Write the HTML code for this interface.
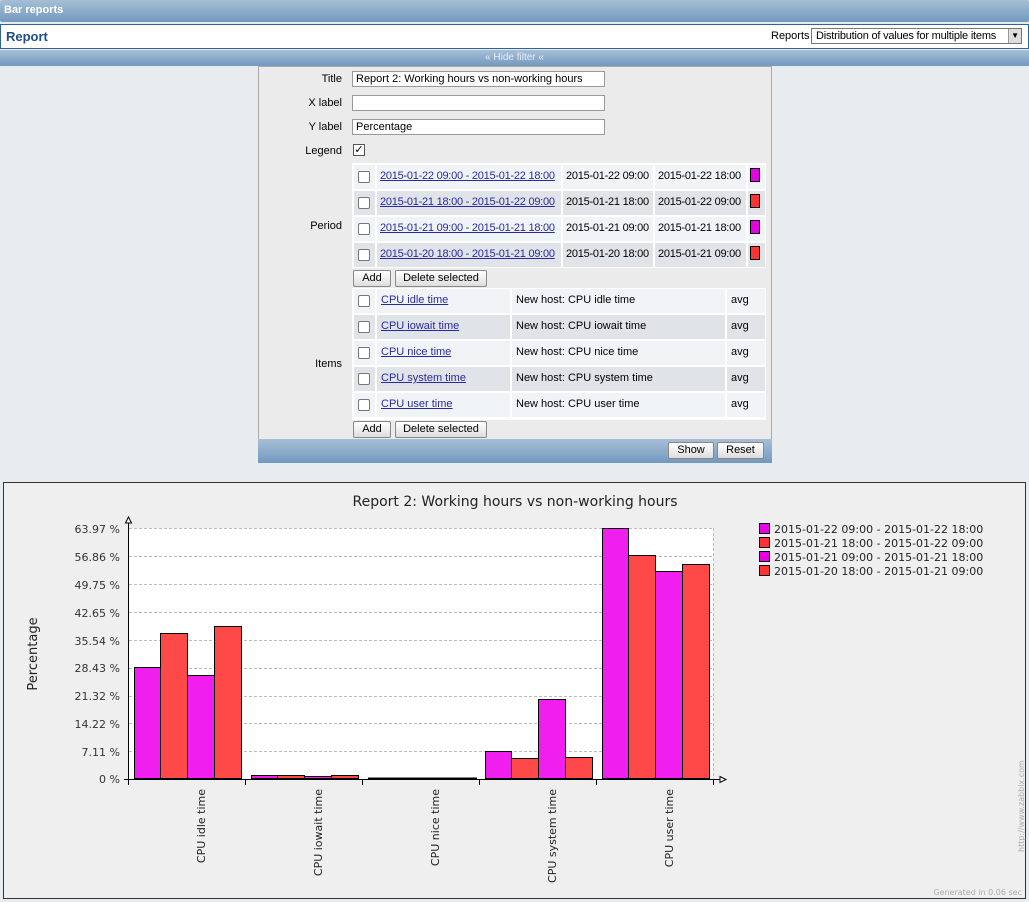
<!DOCTYPE html>
<html><head><meta charset="utf-8"><style>
*{box-sizing:border-box}
body{margin:0;width:1029px;height:902px;background:#e9ecef;font-family:"Liberation Sans",sans-serif;font-size:11px;color:#000;position:relative;overflow:hidden}
.a{position:absolute}
.hdr{left:0;top:0;width:1029px;height:22px;background:linear-gradient(#a6bfd6,#7399bf);color:#fff;font-weight:bold;font-size:11px;padding:4px 0 0 4px;border-radius:2px}
.rep{left:0;top:24px;width:1029px;height:25px;background:#fff;border:1px solid #2e6596}
.bar2{left:0;top:50px;width:1029px;height:16px;background:linear-gradient(#a6bfd6,#7399bf);color:#e6eef6;text-align:center;font-size:10px;line-height:16px}
.panel{left:258px;top:66px;width:514px;height:397px;background:#ebebeb;border:1px solid #aaa}
.lbl{text-align:right;width:84px;left:258px}
.inp{height:16px;border:1px solid #999;background:#fff;padding:1px 3px;font-size:11px}
.cell{height:24px;line-height:22px;padding-left:4px;white-space:nowrap;overflow:hidden}
.n{letter-spacing:-0.25px;padding-left:3px}
.l{color:#2a2a9c;text-decoration:underline}
.cb{width:12px;height:12px;border:1px solid #777;background:#fff;border-radius:2px}
.btn{height:17px;border:1px solid #888;background:linear-gradient(#fff,#ddd);border-radius:2px;font-size:11px;text-align:center;line-height:15px}
.sw{width:10px;height:14px;border:1px solid #000}
</style></head><body>
<div class="a hdr">Bar reports</div>
<div class="a rep"><span class="a" style="left:5px;top:4px;font-weight:bold;font-size:13px;color:#1f4f8a">Report</span>
<span class="a" style="left:770px;top:5px">Reports</span>
<div class="a" style="left:810px;top:3px;width:211px;height:16px;border:1px solid #777;background:#fff;padding:1px 4px;font-size:11px;white-space:nowrap;letter-spacing:-0.2px">Distribution of values for multiple items<span class="a" style="right:0;top:0;width:13px;height:14px;background:#ddd;border-left:1px solid #999;font-size:8px;text-align:center;line-height:14px">▼</span></div></div>
<div class="a bar2">« Hide filter «</div>
<div class="a panel"></div>
<div class="a lbl" style="top:73px">Title</div>
<div class="a lbl" style="top:97px">X label</div>
<div class="a lbl" style="top:121px">Y label</div>
<div class="a lbl" style="top:145px">Legend</div>
<div class="a lbl" style="top:220px">Period</div>
<div class="a lbl" style="top:358px">Items</div>
<div class="a inp" style="left:352px;top:71px;width:253px">Report 2: Working hours vs non-working hours</div>
<div class="a inp" style="left:352px;top:95px;width:253px"></div>
<div class="a inp" style="left:352px;top:119px;width:253px">Percentage</div>
<div class="a" style="left:353px;top:144px;line-height:11px;width:12px;height:12px;border:1px solid #555;background:#fff;text-align:center;font-size:11px">✓</div>

<div class="a" style="left:352px;top:163px;width:414px;height:105px;background:#fff"></div>
<div class="a cell" style="left:354px;top:165px;width:21px;background:#f0f4f7"></div><div class="a cb" style="left:358px;top:171px"></div>
<div class="a cell l n" style="left:377px;top:165px;width:184px;background:#f0f4f7">2015-01-22 09:00 - 2015-01-22 18:00</div>
<div class="a cell n" style="left:563px;top:165px;width:90px;background:#f0f4f7">2015-01-22 09:00</div>
<div class="a cell n" style="left:655px;top:165px;width:91px;background:#f0f4f7">2015-01-22 18:00</div>
<div class="a cell" style="left:748px;top:165px;width:17px;background:#f0f4f7"></div><div class="a sw" style="left:750px;top:168px;background:#e600e6"></div>

<div class="a cell" style="left:354px;top:191px;width:21px;background:#e0e3e8"></div><div class="a cb" style="left:358px;top:197px"></div>
<div class="a cell l n" style="left:377px;top:191px;width:184px;background:#e0e3e8">2015-01-21 18:00 - 2015-01-22 09:00</div>
<div class="a cell n" style="left:563px;top:191px;width:90px;background:#e0e3e8">2015-01-21 18:00</div>
<div class="a cell n" style="left:655px;top:191px;width:91px;background:#e0e3e8">2015-01-22 09:00</div>
<div class="a cell" style="left:748px;top:191px;width:17px;background:#e0e3e8"></div><div class="a sw" style="left:750px;top:194px;background:#ff3333"></div>

<div class="a cell" style="left:354px;top:217px;width:21px;background:#f0f4f7"></div><div class="a cb" style="left:358px;top:223px"></div>
<div class="a cell l n" style="left:377px;top:217px;width:184px;background:#f0f4f7">2015-01-21 09:00 - 2015-01-21 18:00</div>
<div class="a cell n" style="left:563px;top:217px;width:90px;background:#f0f4f7">2015-01-21 09:00</div>
<div class="a cell n" style="left:655px;top:217px;width:91px;background:#f0f4f7">2015-01-21 18:00</div>
<div class="a cell" style="left:748px;top:217px;width:17px;background:#f0f4f7"></div><div class="a sw" style="left:750px;top:220px;background:#e600e6"></div>

<div class="a cell" style="left:354px;top:243px;width:21px;background:#e0e3e8"></div><div class="a cb" style="left:358px;top:249px"></div>
<div class="a cell l n" style="left:377px;top:243px;width:184px;background:#e0e3e8">2015-01-20 18:00 - 2015-01-21 09:00</div>
<div class="a cell n" style="left:563px;top:243px;width:90px;background:#e0e3e8">2015-01-20 18:00</div>
<div class="a cell n" style="left:655px;top:243px;width:91px;background:#e0e3e8">2015-01-21 09:00</div>
<div class="a cell" style="left:748px;top:243px;width:17px;background:#e0e3e8"></div><div class="a sw" style="left:750px;top:246px;background:#ff3333"></div>

<div class="a btn" style="left:353px;top:270px;width:38px">Add</div>
<div class="a btn" style="left:395px;top:270px;width:92px">Delete selected</div>

<div class="a" style="left:352px;top:288px;width:414px;height:132px;background:#fff"></div>
<div class="a cell" style="left:354px;top:289px;width:21px;background:#f0f4f7"></div><div class="a cb" style="left:358px;top:295px"></div>
<div class="a cell l" style="left:377px;top:289px;width:133px;background:#f0f4f7">CPU idle time</div>
<div class="a cell" style="left:512px;top:289px;width:213px;background:#f0f4f7">New host: CPU idle time</div>
<div class="a cell" style="left:727px;top:289px;width:38px;background:#f0f4f7">avg</div>

<div class="a cell" style="left:354px;top:315px;width:21px;background:#e0e3e8"></div><div class="a cb" style="left:358px;top:321px"></div>
<div class="a cell l" style="left:377px;top:315px;width:133px;background:#e0e3e8">CPU iowait time</div>
<div class="a cell" style="left:512px;top:315px;width:213px;background:#e0e3e8">New host: CPU iowait time</div>
<div class="a cell" style="left:727px;top:315px;width:38px;background:#e0e3e8">avg</div>

<div class="a cell" style="left:354px;top:341px;width:21px;background:#f0f4f7"></div><div class="a cb" style="left:358px;top:347px"></div>
<div class="a cell l" style="left:377px;top:341px;width:133px;background:#f0f4f7">CPU nice time</div>
<div class="a cell" style="left:512px;top:341px;width:213px;background:#f0f4f7">New host: CPU nice time</div>
<div class="a cell" style="left:727px;top:341px;width:38px;background:#f0f4f7">avg</div>

<div class="a cell" style="left:354px;top:367px;width:21px;background:#e0e3e8"></div><div class="a cb" style="left:358px;top:373px"></div>
<div class="a cell l" style="left:377px;top:367px;width:133px;background:#e0e3e8">CPU system time</div>
<div class="a cell" style="left:512px;top:367px;width:213px;background:#e0e3e8">New host: CPU system time</div>
<div class="a cell" style="left:727px;top:367px;width:38px;background:#e0e3e8">avg</div>

<div class="a cell" style="left:354px;top:393px;width:21px;background:#f0f4f7"></div><div class="a cb" style="left:358px;top:399px"></div>
<div class="a cell l" style="left:377px;top:393px;width:133px;background:#f0f4f7">CPU user time</div>
<div class="a cell" style="left:512px;top:393px;width:213px;background:#f0f4f7">New host: CPU user time</div>
<div class="a cell" style="left:727px;top:393px;width:38px;background:#f0f4f7">avg</div>

<div class="a btn" style="left:353px;top:421px;width:38px">Add</div>
<div class="a btn" style="left:395px;top:421px;width:92px">Delete selected</div>

<div class="a" style="left:258px;top:439px;width:514px;height:24px;background:linear-gradient(#a6bfd6,#7399bf)"></div>
<div class="a btn" style="left:668px;top:442px;width:46px">Show</div>
<div class="a btn" style="left:717px;top:442px;width:47px">Reset</div>

<svg class="a" style="left:0;top:0" width="1029" height="902" font-family="DejaVu Sans, sans-serif">
<rect x="3.5" y="482.5" width="1022" height="416" fill="#efefef" stroke="#333"/>
<text x="515" y="506" font-size="14" text-anchor="middle" fill="#222">Report 2: Working hours vs non-working hours</text>
<rect x="128" y="528" width="585" height="251" fill="#fff"/>
<g stroke="#bbb" stroke-dasharray="3,2">
<line x1="129" x2="713" y1="528.5" y2="528.5"/><line x1="129" x2="713" y1="556.5" y2="556.5"/><line x1="129" x2="713" y1="584.5" y2="584.5"/><line x1="129" x2="713" y1="612.5" y2="612.5"/><line x1="129" x2="713" y1="640.5" y2="640.5"/><line x1="129" x2="713" y1="668.5" y2="668.5"/><line x1="129" x2="713" y1="696.5" y2="696.5"/><line x1="129" x2="713" y1="723.5" y2="723.5"/><line x1="129" x2="713" y1="751.5" y2="751.5"/>
<line x1="713.5" x2="713.5" y1="528" y2="779"/>
</g>
<g font-size="11" fill="#333" text-anchor="end">
<text x="120" y="533">63.97 %</text><text x="120" y="561">56.86 %</text><text x="120" y="589">49.75 %</text><text x="120" y="617">42.65 %</text><text x="120" y="645">35.54 %</text><text x="120" y="672">28.43 %</text><text x="120" y="700">21.32 %</text><text x="120" y="728">14.22 %</text><text x="120" y="756">7.11 %</text><text x="120" y="783">0 %</text>
</g>
<text transform="translate(37,654) rotate(-90)" font-size="13" text-anchor="middle" fill="#222">Percentage</text>
<g stroke="#000" stroke-width="1">
<rect x="134.5" y="667.5" width="26" height="111" fill="#f01ff0"/><rect x="160.5" y="633.5" width="27" height="145" fill="#ff4848"/><rect x="187.5" y="675.5" width="27" height="103" fill="#f01ff0"/><rect x="214.5" y="626.5" width="27" height="152" fill="#ff4848"/>
<rect x="251.5" y="775.5" width="26" height="3" fill="#f01ff0"/><rect x="277.5" y="775.5" width="27" height="3" fill="#ff4848"/><rect x="304.5" y="776.5" width="27" height="2" fill="#f01ff0"/><rect x="331.5" y="775.5" width="27" height="3" fill="#ff4848"/>
<rect x="368.5" y="778" width="108" height="0.5" fill="#f01ff0"/>
<rect x="485.5" y="751.5" width="26" height="27" fill="#f01ff0"/><rect x="511.5" y="758.5" width="27" height="20" fill="#ff4848"/><rect x="538.5" y="699.5" width="27" height="79" fill="#f01ff0"/><rect x="565.5" y="757.5" width="27" height="21" fill="#ff4848"/>
<rect x="602.5" y="528.5" width="26" height="250" fill="#f01ff0"/><rect x="628.5" y="555.5" width="27" height="223" fill="#ff4848"/><rect x="655.5" y="571.5" width="27" height="207" fill="#f01ff0"/><rect x="682.5" y="564.5" width="27" height="214" fill="#ff4848"/>
</g>
<g stroke="#000"><line x1="128.5" y1="520" x2="128.5" y2="785"/><line x1="124" y1="779.5" x2="720" y2="779.5"/>
<line x1="245.5" y1="779" x2="245.5" y2="785"/><line x1="362.5" y1="779" x2="362.5" y2="785"/><line x1="479.5" y1="779" x2="479.5" y2="785"/><line x1="596.5" y1="779" x2="596.5" y2="785"/><line x1="713.5" y1="779" x2="713.5" y2="785"/></g>
<path d="M125.5 523 L128.5 517 L131.5 523 Z" fill="#fff" stroke="#000"/>
<path d="M720 776.5 L726 779.5 L720 782.5 Z" fill="#fff" stroke="#000"/>
<g font-size="11" fill="#222" text-anchor="end">
<text transform="translate(205,789) rotate(-90)">CPU idle time</text>
<text transform="translate(322,789) rotate(-90)">CPU iowait time</text>
<text transform="translate(439,789) rotate(-90)">CPU nice time</text>
<text transform="translate(556,789) rotate(-90)">CPU system time</text>
<text transform="translate(673,789) rotate(-90)">CPU user time</text>
</g>
<g font-size="11" fill="#222">
<rect x="759.5" y="523.5" width="10" height="10" fill="#e600e6" stroke="#000"/><text x="774" y="533">2015-01-22 09:00 - 2015-01-22 18:00</text>
<rect x="759.5" y="537.5" width="10" height="10" fill="#ff3333" stroke="#000"/><text x="774" y="547">2015-01-21 18:00 - 2015-01-22 09:00</text>
<rect x="759.5" y="551.5" width="10" height="10" fill="#e600e6" stroke="#000"/><text x="774" y="561">2015-01-21 09:00 - 2015-01-21 18:00</text>
<rect x="759.5" y="565.5" width="10" height="10" fill="#ff3333" stroke="#000"/><text x="774" y="575">2015-01-20 18:00 - 2015-01-21 09:00</text>
</g>
<text transform="translate(1024,852) rotate(-90)" font-size="8" fill="#aaa">http://www.zabbix.com</text>
<text x="1022" y="895" font-size="8" fill="#aaa" text-anchor="end">Generated in 0.06 sec</text>
</svg>
</body></html>
